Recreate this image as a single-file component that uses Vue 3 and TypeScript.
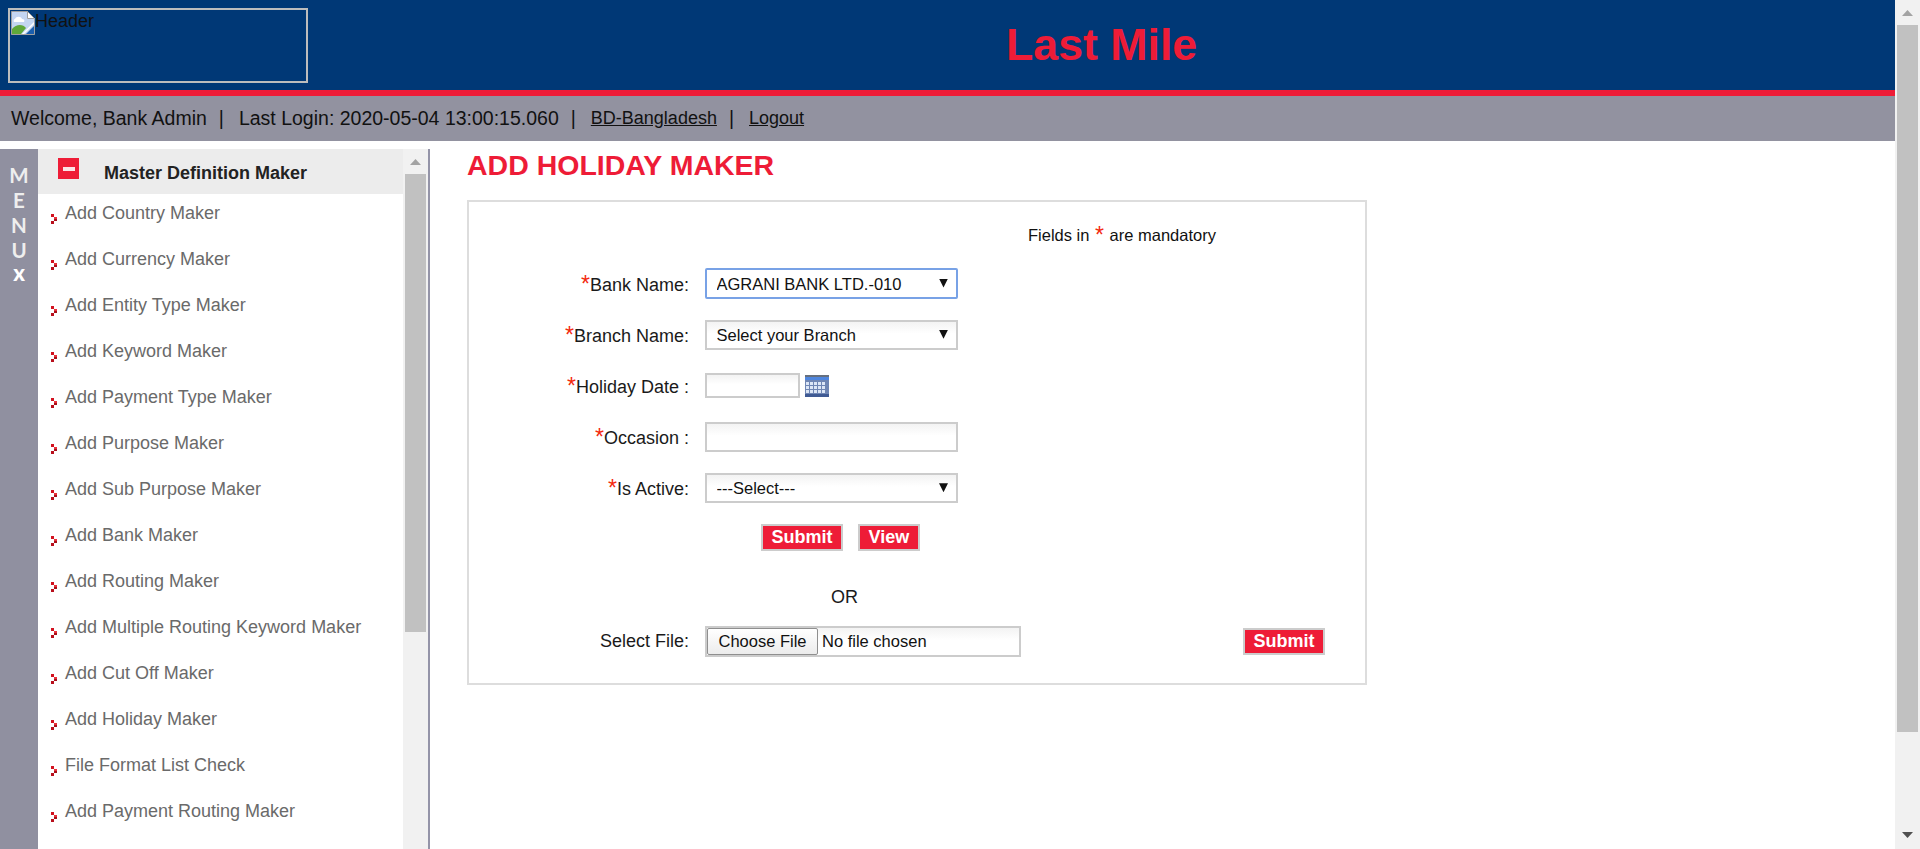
<script setup lang="ts">
const menuItems: string[] = [
  'Add Country Maker',
  'Add Currency Maker',
  'Add Entity Type Maker',
  'Add Keyword Maker',
  'Add Payment Type Maker',
  'Add Purpose Maker',
  'Add Sub Purpose Maker',
  'Add Bank Maker',
  'Add Routing Maker',
  'Add Multiple Routing Keyword Maker',
  'Add Cut Off Maker',
  'Add Holiday Maker',
  'File Format List Check',
  'Add Payment Routing Maker',
]
const menuLetters: string[] = ['M', 'E', 'N', 'U']
const calCols: number[] = [3, 7, 11, 15, 19]
const calRows: number[] = [7, 11, 15]
</script>

<template>
  <div class="root">
    <div class="page">
      <header class="header">
        <div class="logo">
          <svg class="broken" width="24" height="24" viewBox="0 0 24 24">
            <path d="M0.5 0.5h16l7 7v16H0.5z" fill="#c4d6f2" stroke="#a0a0a0" />
            <path d="M16.5 0.5v7h7z" fill="#fff" stroke="#a0a0a0" />
            <path d="M4 8c1-3 6-3 7 0 2 0 3 1 2 3H3C2 10 3 8 4 8z" fill="#fff" />
            <path d="M1 23v-5c4-5 11-5 14-1l-5 6z" fill="#5fa83a" />
            <path d="M11 23L23 11v2l-10 10z" fill="#fff" />
            <path d="M15 23l8-8v8z" fill="#1b5fae" />
          </svg>
          <span class="logo-alt">Header</span>
        </div>
        <h1 class="app-title">Last Mile</h1>
      </header>
      <nav class="userbar">
        <span>Welcome, Bank Admin</span>
        <span class="sep">|</span>
        <span>Last Login: 2020-05-04 13:00:15.060</span>
        <span class="sep">|</span>
        <a class="ulink" href="#">BD-Bangladesh</a>
        <span class="sep">|</span>
        <a class="ulink" href="#">Logout</a>
      </nav>
      <div class="body">
        <aside class="menu-strip">
          <span v-for="l in menuLetters" :key="l" class="menu-letter">{{ l }}</span>
          <span class="menu-x">x</span>
        </aside>
        <div class="panel">
          <div class="panel-head">
            <span class="minus"><i></i></span>
            <span class="panel-title">Master Definition Maker</span>
          </div>
          <ul class="items">
            <li v-for="item in menuItems" :key="item" class="item">
              <svg class="bullet" width="6" height="10" viewBox="0 0 6 10">
                <rect x="0" y="0" width="3" height="3" fill="#d2121f" />
                <rect x="3" y="3" width="3" height="2" fill="#e8303a" />
                <rect x="3" y="5" width="3" height="2" fill="#a80f18" />
                <rect x="0" y="7" width="3" height="3" fill="#b80f1c" />
              </svg>
              <span>{{ item }}</span>
            </li>
          </ul>
        </div>
        <div class="scrollbar inner">
          <div class="arrow up"></div>
          <div class="thumb inner-thumb"></div>
        </div>
        <div class="divider"></div>
        <main class="main">
          <h2 class="page-title">ADD HOLIDAY MAKER</h2>
          <form class="form-box" @submit.prevent>
            <div class="mandatory">Fields in <span class="star mand-star">*</span> are mandatory</div>
            <div class="row">
              <label class="label"><span class="star">*</span>Bank Name:</label>
              <div class="select-wrap">
                <select class="control select focused">
                  <option>AGRANI BANK LTD.-010</option>
                </select>
              </div>
            </div>
            <div class="row">
              <label class="label"><span class="star">*</span>Branch Name:</label>
              <div class="select-wrap">
                <select class="control select">
                  <option>Select your Branch</option>
                </select>
              </div>
            </div>
            <div class="row">
              <label class="label"><span class="star">*</span>Holiday Date :</label>
              <input class="control date" type="text" />
              <svg class="cal" width="24" height="22" viewBox="0 0 24 22">
                <rect x="0" y="0" width="24" height="22" fill="#6f86b4" />
                <rect x="0" y="0" width="24" height="2" fill="#66707f" />
                <rect x="0" y="2" width="24" height="3" fill="#4f86de" />
                <rect x="0" y="19" width="24" height="3" fill="#3f5a94" />
                <template v-for="y in calRows" :key="y">
                  <rect v-for="x in calCols" :key="x" :x="x - 2" :y="y" width="3" height="3" fill="#dce6f6" />
                </template>
              </svg>
            </div>
            <div class="row">
              <label class="label"><span class="star">*</span>Occasion :</label>
              <input class="control text" type="text" />
            </div>
            <div class="row">
              <label class="label"><span class="star">*</span>Is Active:</label>
              <div class="select-wrap">
                <select class="control select">
                  <option>---Select---</option>
                </select>
              </div>
            </div>
            <div class="actions">
              <button class="btn" type="button">Submit</button>
              <button class="btn" type="button">View</button>
            </div>
            <div class="or">OR</div>
            <div class="file-row">
              <label class="label plain">Select File:</label>
              <input class="file" type="file" />
              <button class="btn file-submit" type="button">Submit</button>
            </div>
          </form>
        </main>
      </div>
    </div>
    <div class="scrollbar outer">
      <div class="arrow up"></div>
      <div class="thumb outer-thumb"></div>
      <div class="arrow down"></div>
    </div>
  </div>
</template>

<style>
html,
body {
  margin: 0;
  height: 849px;
  overflow: hidden;
  background: #fff;
}
</style>

<style scoped>
.root {
  display: flex;
  width: 1920px;
  height: 849px;
  overflow: hidden;
  font-family: 'Liberation Sans', Arial, sans-serif;
  color: #111;
}
.page {
  flex: 1;
  min-width: 0;
  display: flex;
  flex-direction: column;
}
.header {
  height: 90px;
  box-sizing: content-box;
  background: #003876;
  border-bottom: 6px solid #ee1c37;
  display: flex;
  align-items: center;
  position: relative;
}
.logo {
  width: 296px;
  height: 71px;
  margin-left: 8px;
  margin-top: 1px;
  border: 2px solid #bdbdbd;
  display: flex;
  align-items: flex-start;
  flex: none;
}
.broken {
  margin: 1px 0 0 1px;
  flex: none;
}
.logo-alt {
  font-size: 18px;
  line-height: 22px;
  color: #111;
}
.app-title {
  position: absolute;
  left: 1006px;
  top: 20px;
  margin: 0;
  font-size: 44.7px;
  line-height: 50px;
  font-weight: 700;
  color: #ee1c37;
}
.userbar {
  height: 45px;
  background: #9292a0;
  display: flex;
  align-items: center;
  padding-left: 11px;
  font-size: 19.5px;
  color: #111;
}
.sep {
  margin: 0 15px 0 12px;
}
.ulink {
  color: #111;
  text-decoration: underline;
  font-size: 18px;
}
.body {
  flex: 1;
  min-height: 0;
  margin-top: 8px;
  display: flex;
}
.menu-strip {
  width: 38px;
  flex: none;
  background: #9090a0;
  display: flex;
  flex-direction: column;
  align-items: center;
  padding-top: 14px;
  box-sizing: border-box;
  color: #eee;
}
.menu-letter {
  font-family: 'Lato', sans-serif;
  font-size: 20.5px;
  font-weight: 700;
  line-height: 25px;
  height: 25px;
}
.menu-x {
  font-family: 'Lato', sans-serif;
  font-size: 22px;
  font-weight: 900;
  line-height: 20px;
  color: #fff;
}
.panel {
  width: 365px;
  flex: none;
  background: #fff;
  overflow: hidden;
}
.panel-head {
  height: 45px;
  background: #ececec;
  display: flex;
  align-items: center;
  padding-left: 20px;
  box-sizing: border-box;
  position: relative;
}
.minus {
  width: 21px;
  height: 21px;
  background: #ee1c37;
  display: flex;
  align-items: center;
  justify-content: center;
  margin-top: -6px;
  flex: none;
}
.minus i {
  display: block;
  width: 12px;
  height: 4px;
  background: #fbe3e6;
}
.panel-title {
  margin-left: 25px;
  font-size: 18px;
  font-weight: 700;
  color: #222;
  padding-top: 3px;
}
.items {
  list-style: none;
  margin: 0;
  padding: 0;
}
.item {
  height: 46px;
  display: flex;
  align-items: flex-start;
  padding-left: 13px;
  font-size: 18px;
  line-height: 38px;
  color: #6a6a6a;
}
.bullet {
  margin-top: 20px;
  margin-right: 8px;
  flex: none;
}
.scrollbar {
  width: 25px;
  flex: none;
  background: #f1f1f1;
  display: flex;
  flex-direction: column;
  align-items: center;
  position: relative;
}
.arrow {
  width: 11px;
  height: 6px;
  background: #a3a3a3;
  flex: none;
}
.arrow.up {
  clip-path: polygon(50% 0, 100% 100%, 0 100%);
  margin-top: 10px;
}
.arrow.down {
  background: #505050;
  clip-path: polygon(0 0, 100% 0, 50% 100%);
  position: absolute;
  top: 832px;
}
.thumb {
  width: 21px;
  background: #c1c1c1;
  flex: none;
}
.inner-thumb {
  margin-top: 9px;
  height: 458px;
}
.outer-thumb {
  margin-top: 9px;
  height: 707px;
}
.divider {
  width: 2px;
  flex: none;
  background: #9494a8;
}
.main {
  flex: 1;
  min-width: 0;
  padding-left: 37px;
}
.page-title {
  margin: 0 0 19px;
  font-size: 28.5px;
  line-height: 32px;
  font-weight: 700;
  color: #ee1c37;
}
.form-box {
  width: 900px;
  height: 485px;
  box-sizing: border-box;
  border: 2px solid #dddddd;
  background: #fff;
}
.mandatory {
  padding: 22px 0 0 559px;
  box-sizing: border-box;
  font-size: 16.5px;
  line-height: 22px;
  height: 44px;
  margin-bottom: 12px;
}
.star {
  color: #f32a10;
  font-size: 23px;
  line-height: 0;
  position: relative;
  top: 1px;
}
.mand-star {
  margin: 0 1px;
  top: 2px;
}
.row {
  height: 51.2px;
  display: flex;
  align-items: center;
}
.label {
  width: 220px;
  margin-right: 16px;
  text-align: right;
  font-size: 18px;
  padding-top: 3px;
  flex: none;
  color: #1a1a1a;
}
.label.plain {
  padding-top: 0;
}
.control {
  box-sizing: border-box;
  border: 2px solid #cccccc;
  background: linear-gradient(#f3f3f3, #fff 45%);
  font-family: inherit;
  font-size: 16.5px;
  color: #111;
  outline: none;
  border-radius: 0;
}
.select-wrap {
  position: relative;
  display: flex;
}
.select-wrap::after {
  content: '';
  position: absolute;
  right: 10px;
  top: 50%;
  margin-top: -5px;
  width: 9px;
  height: 9px;
  background: #111;
  clip-path: polygon(0 0, 100% 0, 50% 100%);
  pointer-events: none;
}
.select {
  width: 253px;
  height: 30px;
  padding: 0 0 0 9.5px;
  appearance: none;
  -webkit-appearance: none;
}
.select.focused {
  height: 31px;
  border-color: #78a2e6;
  border-radius: 2px;
  background: #fff;
}
.date {
  width: 95px;
  height: 25px;
  padding: 0 4px;
}
.cal {
  margin-left: 5px;
  flex: none;
}
.text {
  width: 253px;
  height: 30px;
  padding: 0 4px;
}
.actions {
  height: 48px;
  display: flex;
  align-items: center;
  gap: 15px;
  padding-left: 292px;
}
.btn {
  box-sizing: border-box;
  height: 27px;
  padding: 0 8.5px;
  border: 2px solid #cccccc;
  background: #ee1c37;
  color: #fff;
  font-family: inherit;
  font-size: 18px;
  font-weight: 700;
  line-height: 21px;
  border-radius: 0;
}
.or {
  padding-left: 362px;
  height: 32px;
  margin-top: 19px;
  font-size: 18px;
  line-height: 32px;
  color: #1a1a1a;
}
.file-row {
  margin-top: 13px;
  height: 31px;
  display: flex;
  align-items: center;
}
.file {
  box-sizing: border-box;
  width: 316px;
  height: 31px;
  border: 2px solid #cccccc;
  background: linear-gradient(#f3f3f3, #fff 45%);
  font-family: inherit;
  font-size: 16.5px;
  color: #111;
  flex: none;
}
.file::file-selector-button {
  box-sizing: border-box;
  width: 111px;
  height: 27px;
  margin: 0 4px 0 0;
  border: 1px solid #8f8f8f;
  border-radius: 2px;
  background: linear-gradient(#fff, #ececec);
  font-family: inherit;
  font-size: 16.5px;
  color: #111;
}
.file-submit {
  margin-left: 222px;
  flex: none;
}
.scrollbar.outer {
  height: 849px;
}
</style>
